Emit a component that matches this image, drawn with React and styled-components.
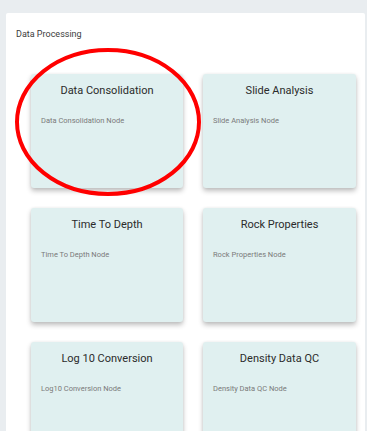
import React from "react";
import styled, { createGlobalStyle } from "styled-components";

const GlobalStyle = createGlobalStyle`
  html, body {
    margin: 0;
    padding: 0;
    background: #e9edf0;
    font-family: Roboto, "Liberation Sans", sans-serif;
    overflow: hidden;
  }
`;

const nodes = [
  { title: "Data Consolidation", desc: "Data Consolidation Node" },
  { title: "Slide Analysis", desc: "Slide Analysis Node" },
  { title: "Time To Depth", desc: "Time To Depth Node" },
  { title: "Rock Properties", desc: "Rock Properties Node" },
  { title: "Log 10 Conversion", desc: "Log10 Conversion Node" },
  { title: "Density Data QC", desc: "Density Data QC Node" },
];

function App() {
  return (
    <>
      <GlobalStyle />
      <Page>
        <Panel>
          <Heading>Data Processing</Heading>
          <Grid>
            {nodes.map((node) => (
              <Card key={node.title}>
                <CardTitle>{node.title}</CardTitle>
                <CardDesc>{node.desc}</CardDesc>
              </Card>
            ))}
          </Grid>
          <Marker viewBox="0 0 190 150" width="190" height="150">
            <ellipse cx="95" cy="75" rx="91" ry="72" fill="none" stroke="#ff0000" strokeWidth="4" />
          </Marker>
        </Panel>
      </Page>
    </>
  );
}

const Page = styled.div`
  padding: 13px 2px 0 6px;
  height: 431px;
  box-sizing: border-box;
  overflow: hidden;
`;

const Panel = styled.div`
  position: relative;
  background: #ffffff;
  height: 100%;
  padding: 27px 10px 0;
  box-sizing: border-box;
  border-radius: 2px 2px 0 0;
  overflow: hidden;
`;

const Heading = styled.div`
  font-size: 9px;
  color: #3c3c3c;
  line-height: 12px;
  margin-top: -12px;
`;

const Grid = styled.div`
  display: grid;
  grid-template-columns: 152px 153px;
  column-gap: 20px;
  row-gap: 20px;
  margin: 34px 0 0 15px;
`;

const Card = styled.div`
  background: #e0f0f0;
  height: 114px;
  border-radius: 3px;
  box-shadow: 0 3px 5px rgba(0, 0, 0, 0.25), 0 0 3px rgba(0, 0, 0, 0.06);
  padding: 9px 10px 0;
  box-sizing: border-box;
`;

const CardTitle = styled.div`
  font-size: 11px;
  color: #2b2b2b;
  text-align: center;
  line-height: 16px;
`;

const CardDesc = styled.div`
  font-size: 7.5px;
  color: #7a7a7a;
  margin-top: 17px;
  line-height: 10px;
`;

const Marker = styled.svg`
  position: absolute;
  left: 7px;
  top: 34px;
  overflow: visible;
  pointer-events: none;
`;

export default App;
